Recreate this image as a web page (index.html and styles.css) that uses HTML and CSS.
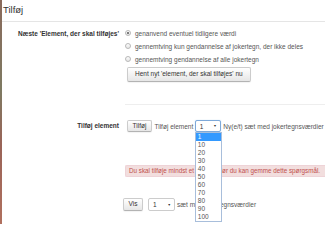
FILE: index.html
```html
<!DOCTYPE html>
<html lang="da">
<head>
<meta charset="utf-8">
<title>Tilføj</title>
<link rel="stylesheet" href="styles.css">
</head>
<body>
<div class="page">
  <div class="strip"></div>
  <div class="main">
    <h2 class="title">Tilføj</h2>

    <div class="row row-next">
      <div class="label">Næste 'Element, der skal tilføjes'</div>
      <div class="field">
        <label class="radio"><span class="dot checked"></span>genanvend eventuel tidligere værdi</label>
        <label class="radio"><span class="dot"></span>gennemtving kun gendannelse af jokertegn, der ikke deles</label>
        <label class="radio"><span class="dot"></span>gennemtving gendannelse af alle jokertegn</label>
        <button class="btn btn-fetch">Hent nyt 'element, der skal tilføjes' nu</button>
      </div>
    </div>

    <div class="sep"></div>

    <div class="row row-add">
      <div class="label">Tilføj element</div>
      <div class="field inline">
        <button class="btn btn-add">Tilføj</button>
        <span class="txt">Tilføj element</span>
        <div class="select focus">
          <span>1</span><span class="arrow">▼</span>
          <ul class="dropdown">
            <li class="active">1</li>
            <li>10</li>
            <li>20</li>
            <li>30</li>
            <li>40</li>
            <li>50</li>
            <li>60</li>
            <li>70</li>
            <li>80</li>
            <li>90</li>
            <li>100</li>
          </ul>
        </div>
        <span class="txt">Ny(e/t) sæt med jokertegnsværdier</span>
      </div>
    </div>

    <div class="error">Du skal tilføje mindst et datasæt før du kan gemme dette spørgsmål.</div>

    <div class="vis-row">
      <button class="btn btn-vis">Vis</button>
      <div class="select plain"><span>1</span><span class="arrow">▼</span></div>
      <span class="txt">sæt med jokertegnsværdier</span>
    </div>
  </div>
</div>
</body>
</html>
```

FILE: styles.css
```css
html, body {
  margin: 0;
  padding: 0;
  background: #fff;
}
body {
  font-family: "Liberation Sans", Arial, sans-serif;
  font-size: 6.5px;
  color: #555;
  overflow: hidden;
}
.page {
  display: flex;
  width: 325px;
  height: 224px;
  overflow: hidden;
}
.strip {
  flex: 0 0 2px;
  background: linear-gradient(to bottom, #8a6a5c 0%, #7e7a62 40%, #9a6458 65%, #b0705e 100%);
}
.main {
  flex: 1;
  min-width: 0;
  display: flex;
  flex-direction: column;
}
.title {
  margin: 0;
  padding: 4px 0 4.5px 1px;
  font-size: 9.5px;
  line-height: 12px;
  font-weight: normal;
  color: #333;
  border-bottom: 1px solid #e5e5e5;
}
.row {
  display: grid;
  grid-template-columns: 117px 1fr;
  column-gap: 5px;
}
.label {
  text-align: right;
  font-weight: bold;
  color: #333;
  line-height: 13px;
  white-space: nowrap;
}
.row-next {
  margin-top: 5px;
}
.field {
  display: flex;
  flex-direction: column;
  align-items: flex-start;
}
.radio {
  display: flex;
  align-items: center;
  height: 13px;
  white-space: nowrap;
}
.dot {
  width: 4px;
  height: 4px;
  border: 0.5px solid #b8b8b8;
  border-radius: 50%;
  background: linear-gradient(#fdfdfd, #e6e6e6);
  margin: 0 4.5px 0 0.5px;
  position: relative;
}
.dot.checked::after {
  content: "";
  position: absolute;
  left: 1px;
  top: 1px;
  width: 2px;
  height: 2px;
  border-radius: 50%;
  background: #555;
}
.btn {
  font-family: inherit;
  font-size: 6.5px;
  color: #333;
  background: linear-gradient(#ffffff, #e6e6e6);
  border: 1px solid #ccc;
  border-bottom-color: #b3b3b3;
  border-radius: 2px;
  padding: 0 7px;
  margin: 0;
  line-height: 1;
  box-shadow: inset 0 1px 0 rgba(255,255,255,0.2), 0 1px 1px rgba(0,0,0,0.05);
}
.btn-fetch {
  margin-top: 1.5px;
  height: 15px;
  margin-left: 3px;
}
.sep {
  margin-top: 22px;
  margin-left: 123px;
  border-top: 1px solid #eee;
}
.row-add {
  margin-top: 15px;
  align-items: center;
}
.row-add .label {
  line-height: 12px;
}
.inline {
  flex-direction: row;
  align-items: center;
  white-space: nowrap;
}
.btn-add {
  height: 12px;
  width: 25px;
  padding: 0;
  margin-left: 3px;
}
.txt {
  margin-left: 2.5px;
}
.select {
  position: relative;
  box-sizing: border-box;
  display: flex;
  align-items: center;
  justify-content: space-between;
  background: #fff;
  border: 1px solid #ccc;
  border-radius: 2px;
  color: #333;
  padding: 0 3px 0 4px;
}
.select .arrow {
  font-size: 3.5px;
  color: #333;
}
.focus {
  width: 26px;
  height: 12px;
  margin-left: 1.5px;
  border-color: #7ea9d9;
  box-shadow: 0 0 1px rgba(82,168,236,0.5);
}
.plain {
  width: 27px;
  height: 13px;
  margin-left: 5px;
}
.dropdown {
  position: absolute;
  left: -1px;
  top: 10.5px;
  width: 27px;
  box-sizing: border-box;
  margin: 0;
  padding: 0;
  list-style: none;
  background: #fff;
  border: 1px solid #a8bedb;
  z-index: 5;
}
.dropdown li {
  height: 8px;
  line-height: 8px;
  padding-left: 2px;
  color: #555;
}
.dropdown li.active {
  background: #3399ff;
  color: #fff;
}
.error {
  margin-top: 33px;
  margin-left: 123px;
  height: 12px;
  box-sizing: border-box;
  line-height: 10px;
  font-size: 6.3px;
  padding-left: 3px;
  background: #f2dede;
  border: 1px solid #eed3d7;
  border-right: 0;
  border-radius: 2px 0 0 2px;
  color: #c0504d;
  white-space: nowrap;
  overflow: hidden;
}
.vis-row {
  margin-top: 21px;
  margin-left: 121px;
  display: flex;
  align-items: center;
  white-space: nowrap;
}
.btn-vis {
  width: 20px;
  height: 13px;
  padding: 0;
}
.vis-row .txt {
  margin-left: 2px;
}
```
